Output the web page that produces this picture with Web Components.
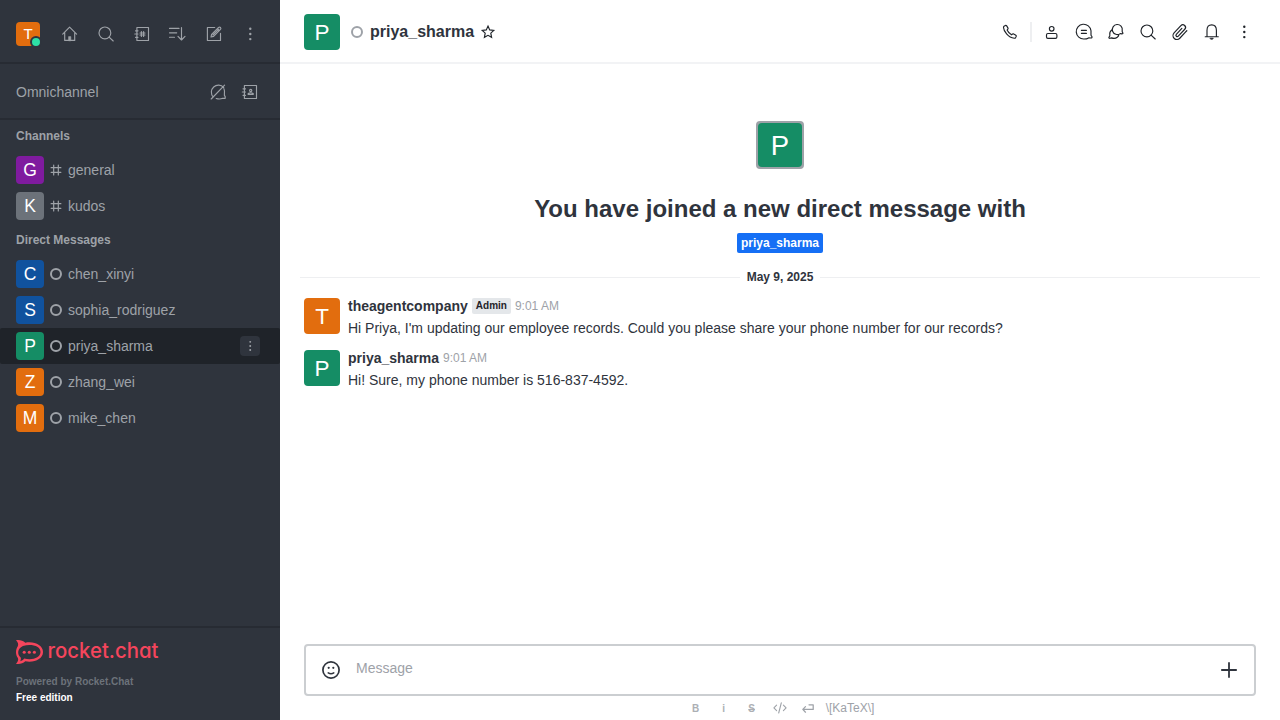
<!DOCTYPE html>
<html lang="en">
<head>
<meta charset="utf-8">
<title>priya_sharma</title>
<style>
html,body{margin:0;height:100%;overflow:hidden}
body{font-family:"Liberation Sans",Arial,sans-serif;font-size:14px;line-height:20px;color:#2f343d;background:#fff}
</style>
</head>
<body>
<rc-app></rc-app>
<script>
const define = (name, render) => customElements.define(name, class extends HTMLElement {
  connectedCallback() {
    if (this.shadowRoot) return;
    this.attachShadow({ mode: 'open' }).innerHTML = render(this);
  }
});
const attr = (el, n, d = '') => el.getAttribute(n) ?? d;

/* Line icons on a 20px grid */
const ICONS = {
  home: '<path d="M2.700 10.1 9.6 3.2 16.600 10.1M4.7 8.8V16.4H14.7V8.8"/><path d="M8.6 16.4V12.6H10.8V16.4Z" fill="currentColor" stroke-width=".6"/>',
  search: '<circle cx="8.9" cy="8.9" r="5.9"/><path d="M13.1 13.1 17.2 17"/>',
  directory: '<path d="M4.9 3.5H16.5V16.5H4.9ZM3.5 6.8H6M2.8 10H6M3.5 13.3H6"/><path d="M9.4 7.6V12.4M11.6 7.6V12.4M8 9H13M8 11H13"/>',
  sort: '<path d="M1.5 4.4H11M1.5 8.8H8.7M1.5 13.2H6.5M13.5 3.5V15.6M10 12.4 13.5 16 17 12.4"/>',
  edit: '<path d="M10.7 3.5H3.4V16.5H16.5V9.3"/><path d="M7 13 7.6 10.3 14.6 3.4Q15.6 2.7 16.5 3.5 17.3 4.5 16.5 5.4L9.6 12.4ZM8.9 11 14.8 5.1M13.2 4.8 15.1 6.7"/>',
  kebab: '<g fill="currentColor" stroke="none"><circle cx="10.3" cy="4.8" r="1.2"/><circle cx="10.3" cy="10" r="1.2"/><circle cx="10.3" cy="15.1" r="1.2"/></g>',
  queue: '<path d="M5.2 15A7 7 0 1 1 15.7 5.5M15.9 6.6Q17 9.2 16.4 12.3V13.4L17.2 14.6V16.3H14.7Q11.8 17.6 8.2 16.5M3.2 17 16.6 3.2"/>',
  contacts: '<path d="M4.4 3.5H16.5V16.5H4.4ZM3 6.8H5.500M2.300 10H5.500M3 13.3H5.500"/><circle cx="10.7" cy="8.5" r="1.1"/><path d="M8.2 12.4V11.6Q10.7 9.9 13.200 11.6V12.4Z"/>',
  hash: '<path d="M7.100 3.900V16.100M12.900 3.900V16.100M3.900 7.100H16.100M3.900 12.900H16.100" stroke-width="1.500"/>',
  phone: '<path d="M4.3 4 5.6 3.4Q6.2 3.2 6.7 3.9L8 6.1Q8.3 6.7 7.8 7.2L7.1 8.1Q8.5 11.2 11.5 12.8L12.6 12Q13.2 11.6 13.8 12L15.8 13.2Q16.5 13.7 16.2 14.4L15.6 15.6Q15.2 16.3 14.3 16.2 9.9 15.7 6.6 11.8 3.6 8.2 3.5 5.4 3.5 4.5 4.3 4Z"/>',
  user: '<circle cx="9.700" cy="6.8" r="2.300"/><rect x="4.500" y="11.5" width="10.4" height="4.800" rx="1.4"/>',
  thread: '<path d="M17 10.4V13.2L18 14.7Q18.3 15.8 17 16L14.6 15.9Q12.8 17 10 17A7.4 7.4 0 1 1 17 8.7Z"/><path d="M7.4 8.400H12.400M7.4 11.4H12.400"/>',
  discussion: '<path d="M16.2 8.5V9.7L16.9 11Q17 11.9 16 11.9L14.2 11.6A5 5 0 1 1 16.2 8.5Z"/><path d="M5.8 7.9Q3.4 9.5 3.8 12.4V14L2.9 15.4Q2.8 16.3 3.8 16.3L5.6 15.9Q8.8 17.2 11.3 15.2 12.7 14.2 12.8 12.6"/>',
  clip: '<path transform="translate(10.200 10.100) rotate(43)" d="M3.900-3.500V4.800A3.900 3.900 0 0 1-3.900 4.800V-5.200A2.650 2.650 0 0 1 1.400-5.200V4.300A1.300 1.300 0 0 1-1.300 4.300V-3.800M3.900-3.500V-5.500" stroke-width="1.200"/>',
  bell: '<path d="M5 14.5V8.3Q5 2.8 9.7 2.8T14.4 8.3V14.5M3.2 14.7H16.3"/><path d="M8.3 16.2H11.3L10.6 17.2H9Z" fill="currentColor" stroke-width=".7"/>',
  star: '<path d="M10 4.100 11.700 7.9 15.800 8.4 12.800 11.2 13.600 15.300 10 13.300 6.400 15.300 7.200 11.2 4.200 8.4 8.300 7.9Z" stroke-linejoin="miter"/>',
  emoji: '<circle cx="10" cy="10" r="8.1" stroke-width="1.7"/><path d="M7.2 12.9Q10 14.700 12.8 12.9" stroke-width="1.5"/><circle cx="7.7" cy="7.8" r="1.1" fill="currentColor" stroke="none"/><circle cx="12.3" cy="7.8" r="1.1" fill="currentColor" stroke="none"/>',
  plus: '<path d="M10 2.200V17.800M2.200 10H17.800" stroke-width="1.8" stroke-linecap="butt"/>',
  code: '<path d="M6.6 7.200 3.900 9.9 6.6 12.600M13.4 7.200 16.1 9.9 13.4 12.600M11.3 4.800 8.700 15" stroke-width="1.1"/>',
  enter: '<path d="M7.5 8.600 4.8 11.4 7.5 14.200M5 11.4H15.2V6.8H11" stroke-width="1.25"/>'
};
define('rc-icon', el => `<style>
  :host{display:block;flex:none;width:${attr(el,'size','20')}px;height:${attr(el,'size','20')}px}
  svg{display:block;width:100%;height:100%;fill:none;stroke:currentColor;stroke-width:1.15;stroke-linecap:round;stroke-linejoin:round;overflow:visible}
</style><svg viewBox="0 0 20 20">${ICONS[attr(el,'name')]}</svg>`);

define('rc-avatar', el => `<style>
  :host{display:block;flex:none;box-sizing:border-box;width:${attr(el,'size')}px;height:${attr(el,'size')}px;border-radius:4px;overflow:hidden;background:${attr(el,'color')}}
  svg{display:block;width:100%;height:100%}
  text{font:400 125px "Liberation Sans",Arial,sans-serif;fill:#fff;text-anchor:middle}
</style><svg viewBox="0 0 200 200"><text x="100" y="100" dy=".36em">${attr(el,'letter')}</text></svg>`);

define('rc-presence', () => `<style>
  :host{display:block;flex:none;box-sizing:border-box;width:12px;height:12px;border:2px solid #9ea2a8;border-radius:50%}
</style>`);

define('rc-section-title', () => `<style>
  :host{display:flex;align-items:center;height:32px;padding:0 16px;font-size:12px;font-weight:700;line-height:16px;color:#9ea2a8}
</style><slot></slot>`);

define('rc-room', el => {
  const active = el.hasAttribute('active');
  return `<style>
  :host{display:flex;align-items:center;height:36px;padding:0 20px 0 16px;box-sizing:border-box;color:#9ea2a8;${active ? 'background:#1f2329;border-radius:2px' : ''}}
  .kind{width:16px;height:16px;margin:0 4px;display:grid;place-items:center}
  .name{flex:1}
  .menu{width:20px;height:20px;border-radius:4px;background:#2f343d;display:grid;place-items:center}
  </style>
  <rc-avatar size="28" letter="${attr(el,'letter')}" color="${attr(el,'color')}"></rc-avatar>
  <span class="kind">${el.hasAttribute('channel') ? '<rc-icon name="hash" size="16"></rc-icon>' : '<rc-presence></rc-presence>'}</span>
  <span class="name"><slot></slot></span>
  ${active ? '<span class="menu"><rc-icon name="kebab" size="16"></rc-icon></span>' : ''}`;
});

define('rc-logo', () => `<style>
  :host{display:block;height:24px;color:#f5455c}
  svg{display:block;overflow:visible}
  text{font:500 21px Inter,"Open Sans",sans-serif;font-feature-settings:"cv11","ss03";fill:currentColor}
</style><svg width="143" height="24" viewBox="0 0 143 24">
  <path fill="currentColor" fill-rule="evenodd" d="M0 .2C3.700-.4 7 .7 9.300 2.700 18 .9 27 4.900 27 12S18 23 9.300 21.300C7 23.400 3.700 24.400 0 23.800 2 21.900 2.600 19.900 1.900 18.100-.6 14.500-.6 9.500 1.900 5.900 2.600 4.100 2 2.100 0 .2ZM6.900 5.900C1.100 8.600 1.100 14.600 4.700 17.400 5.200 18.900 4.800 20.200 4.100 21.200 5.900 20.800 7.200 19.900 8.200 18.600 16.600 20.600 24.500 17.700 24.500 12S16 3.500 6.900 5.900Z"/>
  <g fill="currentColor"><circle cx="8.2" cy="12.300" r="1.550"/><circle cx="13.300" cy="12.300" r="1.550"/><circle cx="18.400" cy="12.300" r="1.550"/></g>
  <text x="31.500" y="18" textLength="111" lengthAdjust="spacingAndGlyphs">rocket.chat</text>
</svg>`);

define('rc-sidebar', () => `<style>
  :host{display:flex;flex-direction:column;width:280px;background:#2f343d;color:#9ea2a8}
  .bar,.omni{display:flex;align-items:center;box-sizing:border-box;border-bottom:2px solid #272b33}
  .bar{height:64px;gap:16px;padding:6px 20px 0 16px}
  .omni{height:56px;gap:12px;padding:2px 20px 0 16px}
  .omni span{flex:1}
  .me{position:relative;margin-right:4px}
  .dot{position:absolute;left:14px;top:14px;width:8px;height:8px;border:2px solid #2f343d;border-radius:50%;background:#2de0a5}
  .rooms{flex:1}
  footer{height:94px;box-sizing:border-box;border-top:2px solid #272b33;padding:12px 16px;font-size:10px;font-weight:700;line-height:16px}
  .by{margin-top:10px;color:#6c727a}
  .ed{color:#fff}
</style>
<div class="bar">
  <div class="me"><rc-avatar size="24" letter="T" color="#e26d0e"></rc-avatar><i class="dot"></i></div>
  <rc-icon name="home"></rc-icon><rc-icon name="search"></rc-icon><rc-icon name="directory"></rc-icon>
  <rc-icon name="sort"></rc-icon><rc-icon name="edit"></rc-icon><rc-icon name="kebab"></rc-icon>
</div>
<div class="omni"><span>Omnichannel</span><rc-icon name="queue"></rc-icon><rc-icon name="contacts"></rc-icon></div>
<div class="rooms">
  <rc-section-title>Channels</rc-section-title>
  <rc-room channel letter="G" color="#7f1b9f">general</rc-room>
  <rc-room channel letter="K" color="#6c727a">kudos</rc-room>
  <rc-section-title>Direct Messages</rc-section-title>
  <rc-room letter="C" color="#10529e">chen_xinyi</rc-room>
  <rc-room letter="S" color="#10529e">sophia_rodriguez</rc-room>
  <rc-room letter="P" color="#158d65" active>priya_sharma</rc-room>
  <rc-room letter="Z" color="#e26d0e">zhang_wei</rc-room>
  <rc-room letter="M" color="#e26d0e">mike_chen</rc-room>
</div>
<footer><rc-logo></rc-logo><div class="by">Powered by Rocket.Chat</div><div class="ed">Free edition</div></footer>`);

define('rc-room-header', () => `<style>
  :host{display:flex;align-items:center;height:64px;box-sizing:border-box;border-bottom:2px solid #f2f3f5;padding:2px 26px 0 24px;color:#1f2329}
  rc-presence{margin:0 7px 0 11px}
  h1{margin:0 4px 0 0;font-size:16px;line-height:24px;font-weight:700;color:#2f343d}
  .tools{display:flex;align-items:center;gap:12px;margin-left:auto}
  .rule{width:2px;height:20px;background:#eeeff1;margin:0 -2px 0 -2px}
</style>
<rc-avatar size="36" letter="P" color="#158d65"></rc-avatar><rc-presence></rc-presence>
<h1>priya_sharma</h1><rc-icon name="star"></rc-icon>
<div class="tools"><rc-icon name="phone"></rc-icon><i class="rule"></i><rc-icon name="user"></rc-icon>
<rc-icon name="thread"></rc-icon><rc-icon name="discussion"></rc-icon><rc-icon name="search"></rc-icon>
<rc-icon name="clip"></rc-icon><rc-icon name="bell"></rc-icon><rc-icon name="kebab"></rc-icon></div>`);

define('rc-intro', () => `<style>
  :host{display:flex;flex-direction:column;align-items:center;padding-top:57px}
  .frame{border:2px solid #9ea2a8;border-radius:4px;background:#9ea2a8}
  h2{margin:24px 0 8px;font-size:24px;line-height:32px;font-weight:700}
  .tag{height:20px;padding:0 4px;border-radius:2px;background:#156ff5;color:#fff;font-size:12px;font-weight:700}
</style>
<div class="frame"><rc-avatar size="44" letter="P" color="#158d65"></rc-avatar></div>
<h2>You have joined a new direct message with</h2><span class="tag"><slot></slot></span>`);

define('rc-divider', () => `<style>
  :host{display:flex;align-items:center;gap:7px;height:20px;margin:14px 20px 0;font-size:12px;font-weight:700;color:#2f343d}
  i{flex:1;height:1px;background:#eeeff1;margin-top:1px}
</style><i></i><slot></slot><i></i>`);

define('rc-message', el => `<style>
  :host{display:flex;gap:8px;height:52px;padding:0 24px}
  .head{display:flex;align-items:center;gap:4px;height:16px;margin-bottom:4px}
  b{font-size:14px}
  .role{height:16px;line-height:16px;padding:0 4px;border-radius:2px;background:#e4e7ea;color:#1f2329;font-size:10px;font-weight:700}
  time{font-size:12px;color:#9ea2a8}
</style>
<rc-avatar size="36" letter="${attr(el,'letter')}" color="${attr(el,'color')}"></rc-avatar>
<div><div class="head"><b>${attr(el,'user')}</b>${el.hasAttribute('role-tag') ? `<span class="role">${attr(el,'role-tag')}</span>` : ''}<time>${attr(el,'time')}</time></div><slot></slot></div>`);

define('rc-composer', () => `<style>
  :host{display:block;padding:0 24px}
  .box{display:flex;align-items:center;height:52px;box-sizing:border-box;border:2px solid #cbced1;border-radius:4px;padding:0 15px;color:#2f343d}
  .ph{flex:1;margin:-4px 0 0 15px;color:#9ea2a8}
  .tools{display:flex;align-items:center;justify-content:center;height:24px;gap:8px;color:#9ea2a8;font-size:12px}
  .tools span{width:20px;padding-top:2px;text-align:center;font-size:10px;font-weight:700;opacity:.85}
  .tools .s{text-decoration:line-through}
</style>
<div class="box"><rc-icon name="emoji"></rc-icon><span class="ph">Message</span><rc-icon name="plus"></rc-icon></div>
<div class="tools"><span>B</span><span>i</span><span class="s">S</span><rc-icon name="code"></rc-icon><rc-icon name="enter"></rc-icon><div>\\[KaTeX\\]</div></div>`);

define('rc-app', () => `<style>
  :host{display:flex;height:100vh}
  main{flex:1;display:flex;flex-direction:column;min-width:0}
  .feed{flex:1}
  rc-divider{margin-bottom:11px}
</style>
<rc-sidebar></rc-sidebar>
<main><rc-room-header></rc-room-header>
<div class="feed"><rc-intro>priya_sharma</rc-intro><rc-divider>May 9, 2025</rc-divider>
<rc-message letter="T" color="#e26d0e" user="theagentcompany" role-tag="Admin" time="9:01 AM">Hi Priya, I'm updating our employee records. Could you please share your phone number for our records?</rc-message>
<rc-message letter="P" color="#158d65" user="priya_sharma" time="9:01 AM">Hi! Sure, my phone number is 516-837-4592.</rc-message></div>
<rc-composer></rc-composer></main>`);
</script>
</body>
</html>
